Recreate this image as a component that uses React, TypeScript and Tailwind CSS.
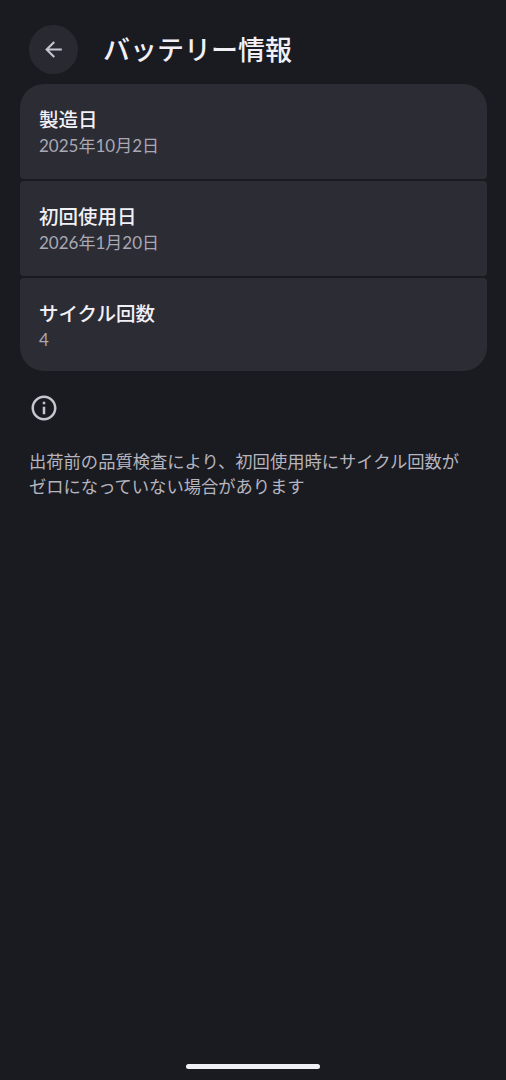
import { MdArrowBack, MdInfoOutline } from 'react-icons/md';

interface BatteryItem {
  label: string;
  value: string;
  className: string;
}

const items: BatteryItem[] = [
  { label: '製造日', value: '2025年10月2日', className: 'h-[95px] pt-[22px] rounded-t-[24px] rounded-b-[4px]' },
  { label: '初回使用日', value: '2026年1月20日', className: 'h-[95px] pt-[22px] rounded-[4px]' },
  { label: 'サイクル回数', value: '4', className: 'h-[93px] pt-[22px] rounded-t-[4px] rounded-b-[24px]' },
];

export default function App() {
  return (
    <div className="w-full h-screen bg-[#1a1b21] flex flex-col overflow-hidden font-['Lato','Noto_Sans_CJK_JP',sans-serif]">
      <header className="flex items-center h-[84px] pl-[29px] pt-[15px]">
        <button className="w-[49px] h-[49px] rounded-full bg-[#292a31] flex items-center justify-center text-[#c6c5d0]">
          <MdArrowBack size={25} />
        </button>
        <h1 className="ml-[25px] text-[27px] leading-9 font-medium text-[#f2f0f7]">バッテリー情報</h1>
      </header>

      <main className="flex-1">
        <div className="mx-[19.5px] flex flex-col gap-[2px]">
          {items.map((item) => (
            <section key={item.label} className={`bg-[#2c2c35] px-[19.5px] ${item.className}`}>
              <h2 className="text-[19.5px] leading-[27px] font-medium text-[#f2f0f7]">{item.label}</h2>
              <p className="text-[17px] leading-[26px] text-[#a9a8b3]">{item.value}</p>
            </section>
          ))}
        </div>

        <div className="px-[29px] pt-[22px]">
          <MdInfoOutline size={30} className="text-[#c6c5d0]" />
          <p className="mt-[26px] text-[17.3px] leading-[25px] text-[#b5b4bf]">
            出荷前の品質検査により、初回使用時にサイクル回数が
            <br />
            ゼロになっていない場合があります
          </p>
        </div>
      </main>

      <div className="mx-auto mb-[11px] w-[134px] h-[5px] rounded-full bg-[#f2f0f7]" />
    </div>
  );
}
